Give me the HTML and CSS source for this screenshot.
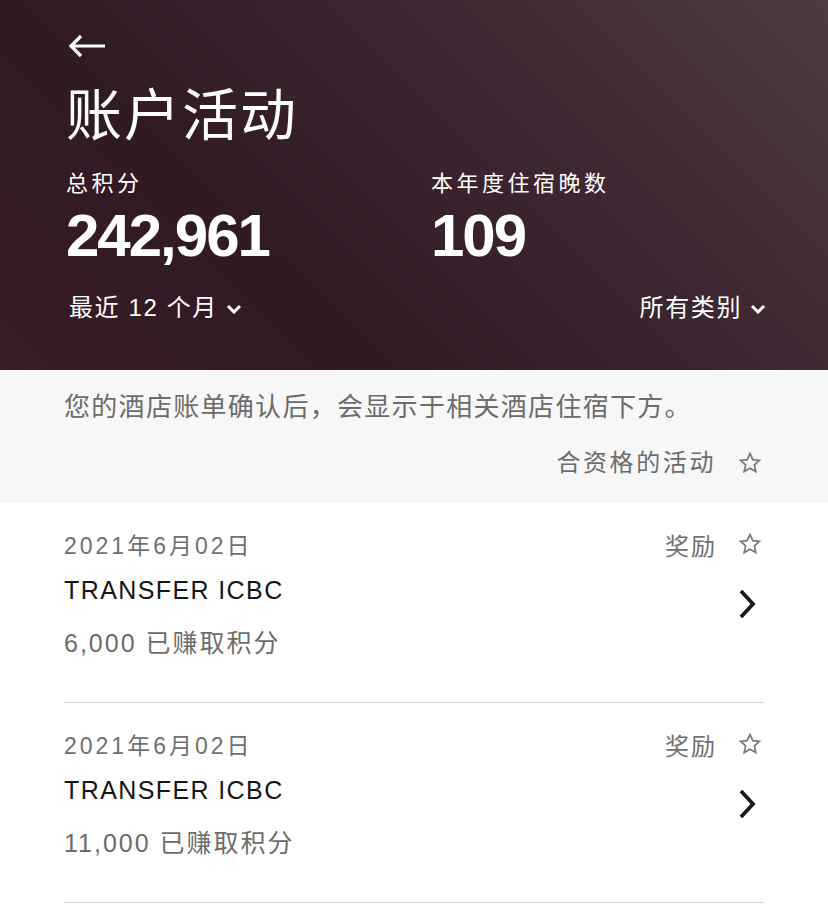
FILE: index.html
```html
<!DOCTYPE html>
<html lang="zh-CN">
<head>
    <meta charset="UTF-8">
    <meta name="viewport" content="width=device-width, initial-scale=1.0">
    <title>账户活动</title>
    <link rel="stylesheet" href="styles.css">
</head>
<body>
    <header class="hero">
        <a href="#" class="back">
            <svg width="40" height="24" viewBox="0 0 40 24"><path d="M38 12H4M14 2L4 12l10 10" fill="none" stroke="#fff" stroke-width="3.2" stroke-linecap="butt" stroke-linejoin="miter"/></svg>
        </a>
        <h1>账户活动</h1>
        <div class="stats">
            <div class="stat">
                <p class="label">总积分</p>
                <p class="value">242,961</p>
            </div>
            <div class="stat">
                <p class="label">本年度住宿晚数</p>
                <p class="value">109</p>
            </div>
        </div>
        <div class="filters">
            <a href="#" class="filter">最近 12 个月 <svg class="caret" width="16" height="10" viewBox="0 0 16 10"><path d="M2 2l6 6 6-6" fill="none" stroke="#fff" stroke-width="3"/></svg></a>
            <a href="#" class="filter">所有类别 <svg class="caret" width="16" height="10" viewBox="0 0 16 10"><path d="M2 2l6 6 6-6" fill="none" stroke="#fff" stroke-width="3"/></svg></a>
        </div>
    </header>

    <section class="notice">
        <p>您的酒店账单确认后，会显示于相关酒店住宿下方。</p>
        <div class="eligible">
            <span>合资格的活动</span>
            <svg class="star" width="24" height="24" viewBox="0 0 24 24"><path d="M12 2.6l2.8 6.1 6.6.7-5 4.5 1.4 6.6L12 17.2l-5.8 3.3 1.4-6.6-5-4.5 6.6-.7z" fill="none" stroke="#777" stroke-width="1.7" stroke-linejoin="miter"/></svg>
        </div>
    </section>

    <ul class="activity">
        <li class="row">
            <div class="row-top">
                <span class="date">2021年6月02日</span>
                <span class="tag">奖励 <svg class="star" width="24" height="24" viewBox="0 0 24 24"><path d="M12 2.6l2.8 6.1 6.6.7-5 4.5 1.4 6.6L12 17.2l-5.8 3.3 1.4-6.6-5-4.5 6.6-.7z" fill="none" stroke="#777" stroke-width="1.7"/></svg></span>
            </div>
            <div class="row-body">
                <div>
                    <p class="title">TRANSFER ICBC</p>
                    <p class="points">6,000 已赚取积分</p>
                </div>
                <svg class="chev" width="22" height="32" viewBox="0 0 22 32"><path d="M5 3l12 13L5 29" fill="none" stroke="#1a1a1a" stroke-width="3.8"/></svg>
            </div>
        </li>
        <li class="row">
            <div class="row-top">
                <span class="date">2021年6月02日</span>
                <span class="tag">奖励 <svg class="star" width="24" height="24" viewBox="0 0 24 24"><path d="M12 2.6l2.8 6.1 6.6.7-5 4.5 1.4 6.6L12 17.2l-5.8 3.3 1.4-6.6-5-4.5 6.6-.7z" fill="none" stroke="#777" stroke-width="1.7"/></svg></span>
            </div>
            <div class="row-body">
                <div>
                    <p class="title">TRANSFER ICBC</p>
                    <p class="points">11,000 已赚取积分</p>
                </div>
                <svg class="chev" width="22" height="32" viewBox="0 0 22 32"><path d="M5 3l12 13L5 29" fill="none" stroke="#1a1a1a" stroke-width="3.8"/></svg>
            </div>
        </li>
    </ul>
</body>
</html>
```

FILE: styles.css
```css
* {
    margin: 0;
    padding: 0;
    box-sizing: border-box;
}
body {
    font-family: "Liberation Sans", "Noto Sans CJK SC", sans-serif;
    background: #fff;
    color: #1a1a1a;
    width: 828px;
}
a {
    color: inherit;
    text-decoration: none;
}
.hero {
    height: 370px;
    padding: 30px 62px 0 66px;
    color: #fff;
    background: linear-gradient(225deg, #4e3b42 0%, #3c2631 38%, #301a24 68%, #381c28 100%);
}
.back {
    display: flex;
    align-items: center;
    height: 32px;
    margin-left: 1px;
}
.hero h1 {
    margin-top: 22px;
    font-size: 56px;
    font-weight: 400;
    line-height: 64px;
    letter-spacing: 2px;
}
.stats {
    display: grid;
    grid-template-columns: 365px 1fr;
    margin-top: 22px;
}
.label {
    font-size: 22px;
    line-height: 28px;
    letter-spacing: 3.5px;
}
.value {
    margin-top: 8px;
    font-size: 60px;
    font-weight: 700;
    line-height: 60px;
    letter-spacing: -2px;
}
.filters {
    display: flex;
    justify-content: space-between;
    margin-top: 26px;
}
.filter {
    display: flex;
    align-items: center;
    gap: 8px;
    font-size: 24px;
    line-height: 32px;
    letter-spacing: 1.6px;
    margin-left: 3px;
}
.caret {
    margin-top: 2px;
}
.notice {
    background: #f7f7f7;
    height: 133px;
    padding: 22px 66px 0 64px;
    color: #6c6c6c;
}
.notice p {
    font-size: 26px;
    line-height: 30px;
    letter-spacing: 1.3px;
}
.eligible {
    display: flex;
    justify-content: flex-end;
    align-items: center;
    gap: 22px;
    margin-top: 26px;
    font-size: 24px;
    line-height: 30px;
    letter-spacing: 2.6px;
}
.activity {
    list-style: none;
    padding: 0 64px;
}
.row {
    height: 200px;
    padding-top: 26px;
    border-bottom: 1.5px solid #d2d2d2;
}
.row-top {
    display: flex;
    justify-content: space-between;
    align-items: center;
    height: 30px;
}
.date {
    font-size: 23px;
    letter-spacing: 3px;
    color: #707070;
}
.tag {
    display: flex;
    align-items: center;
    gap: 21px;
    font-size: 24px;
    letter-spacing: 2px;
    color: #707070;
    margin-right: 2px;
}
.row-body {
    display: flex;
    justify-content: space-between;
    align-items: flex-start;
    margin-top: 16px;
}
.title {
    font-size: 25px;
    line-height: 30px;
    letter-spacing: 1.4px;
    color: #151515;
}
.points {
    margin-top: 23px;
    font-size: 25px;
    line-height: 30px;
    letter-spacing: 2px;
    color: #6c6c6c;
}
.chev {
    margin-top: 13px;
    margin-right: 6px;
}
```
